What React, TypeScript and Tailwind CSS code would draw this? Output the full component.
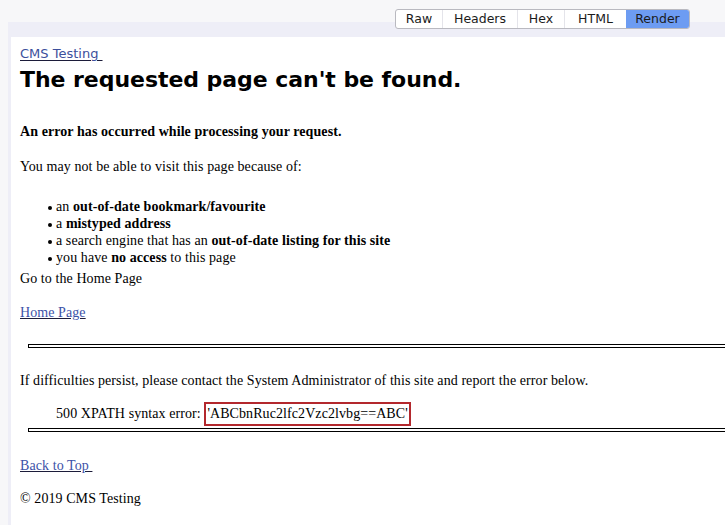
const tabs = ["Raw", "Headers", "Hex", "HTML", "Render"];
const tabWidths: Record<string, string> = {
  Raw: "w-[46px]",
  Headers: "w-[75px]",
  Hex: "w-[47px]",
  HTML: "w-[62px]",
  Render: "w-[63px]",
};

const serif = "font-['Liberation_Serif','Times_New_Roman',serif]";

function Bullet({ children }: { children: React.ReactNode }) {
  return (
    <li className="flex items-center h-[17px]">
      <span className="w-[4px] h-[4px] rounded-full bg-black ml-[28px] mr-[4px] mt-[3px]" />
      <span>{children}</span>
    </li>
  );
}

function DoubleRule({ className = "" }: { className?: string }) {
  return <div className={`ml-[8px] -mr-[20px] h-[4px] border border-black ${className}`} />;
}

export default function App() {
  return (
    <div className="relative w-[725px] h-[525px] overflow-hidden bg-[#f7f7f9]">
      {/* view switcher */}
      <div className="absolute top-[9px] left-[395px] z-10 flex h-[20px] rounded-[3px] border border-[#b9b9c0] bg-white overflow-hidden font-['DejaVu_Sans','Liberation_Sans',sans-serif] text-[12.5px] text-[#1b1b1b]">
        {tabs.map((tab, i) => (
          <div
            key={tab}
            className={`${tabWidths[tab]} flex items-center justify-center ${
              tab === "Render" ? "bg-[#6d9cf2]" : ""
            } ${i > 0 && tab !== "Render" ? "border-l border-[#e4e4ea]" : ""}`}
          >
            {tab}
          </div>
        ))}
      </div>

      <div className="ml-[8px] mt-[22px] h-[503px] bg-[#eeeef7] pl-[3px] pt-[15px]">
        <div className={`h-full bg-white pl-[9px] pt-[9px] ${serif} text-[14px] leading-[16px] tracking-[0.08px] text-black`}>
          <a className="block w-fit font-['DejaVu_Sans','Liberation_Sans',sans-serif] text-[13px] leading-[16px] tracking-normal text-[#3c4f9c] underline decoration-[#1c1c3a] underline-offset-2">
            CMS Testing&nbsp;
          </a>
          <h1 className="mt-[5px] font-['DejaVu_Sans','Liberation_Sans',sans-serif] text-[22px] leading-[26px] font-bold tracking-[-0.05px]">
            The requested page can't be found.
          </h1>

          <p className="mt-[31px] font-bold">An error has occurred while processing your request.</p>
          <p className="mt-[19px]">You may not be able to visit this page because of:</p>

          <ul className="mt-[23px]">
            <Bullet>
              an <b>out-of-date bookmark/favourite</b>
            </Bullet>
            <Bullet>
              a <b>mistyped address</b>
            </Bullet>
            <Bullet>
              a search engine that has an <b>out-of-date listing for this site</b>
            </Bullet>
            <Bullet>
              you have <b>no access</b> to this page
            </Bullet>
          </ul>
          <p className="mt-[5px]">Go to the Home Page</p>

          <a className="mt-[18px] block w-fit text-[#3c52a8] underline decoration-[#1c1c3a]">Home Page</a>

          <DoubleRule className="mt-[23px]" />

          <p className="mt-[25px]">
            If difficulties persist, please contact the System Administrator of this site and report the error below.
          </p>
          <div className="mt-[17px] flex h-[16px] items-center pl-[36px]">
            <span>500 XPATH syntax error:&nbsp;</span>
            <span className="border-2 border-[#b3282d] px-[1px] py-[2px]">'ABCbnRuc2lfc2Vzc2lvbg==ABC'</span>
          </div>

          <DoubleRule className="mt-[6px]" />

          <a className="mt-[26px] block w-fit text-[#3c52a8] underline decoration-[#1c1c3a]">Back to Top&nbsp;</a>
          <p className="mt-[17px]">© 2019 CMS Testing</p>
        </div>
      </div>
    </div>
  );
}
